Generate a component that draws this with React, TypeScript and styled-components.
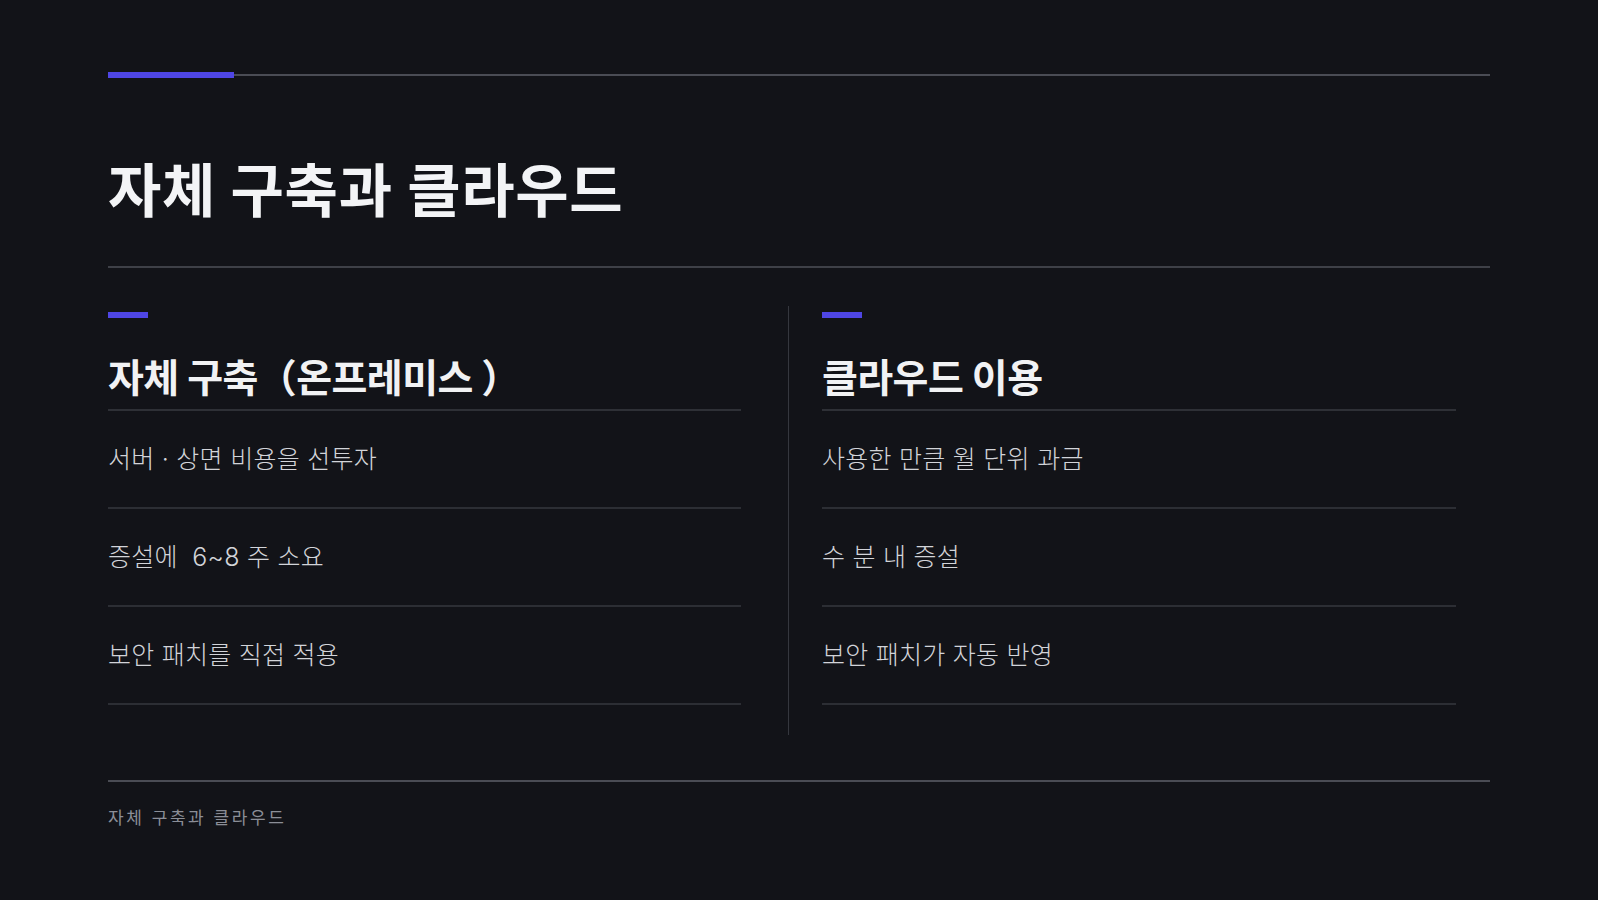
import React from 'react'
import styled, { createGlobalStyle } from 'styled-components'

const GlobalStyle = createGlobalStyle`
  html, body {
    margin: 0;
    padding: 0;
    background: #121318;
  }
  body {
    font-family: Inter, "Noto Sans CJK KR", "Noto Sans", sans-serif;
  }
`

const Slide = styled.div`
  width: 1598px;
  height: 900px;
  box-sizing: border-box;
  padding: 72px 108px 0;
  background: #121318;
  color: #f2f3f5;
  display: flex;
  flex-direction: column;
`

const TopRule = styled.div`
  display: flex;
  align-items: center;
  height: 6px;
`

const Accent = styled.div<{ $width: number }>`
  width: ${({ $width }) => $width}px;
  height: 6px;
  background: #4f46e5;
  flex-shrink: 0;
`

const RuleLine = styled.div`
  flex: 1;
  height: 2px;
  background: #4a4c54;
`

const Title = styled.h1`
  margin: 84px 0 0;
  padding-bottom: 46px;
  border-bottom: 2px solid #3e4047;
  font-size: 58px;
  line-height: 58px;
  font-weight: 700;
  letter-spacing: 0.012em;
  color: #f3f4f6;
`

const Columns = styled.div`
  display: grid;
  grid-template-columns: 680px 1px 1fr;
  margin-top: 38px;
`

const Column = styled.section<{ $left: number; $right: number }>`
  padding: 6px ${({ $right }) => $right}px 30px ${({ $left }) => $left}px;
`

const Divider = styled.div`
  background: #35373e;
`

const Heading = styled.h2`
  margin: 40px 0 0;
  padding-bottom: 12px;
  border-bottom: 2px solid #2e3036;
  font-size: 39px;
  line-height: 39px;
  font-weight: 700;
  letter-spacing: -0.015em;
  color: #f1f2f4;
`

const ItemList = styled.ul`
  list-style: none;
  margin: 0;
  padding: 0;
`

const Item = styled.li`
  height: 96px;
  display: flex;
  align-items: center;
  border-bottom: 2px solid #2c2e34;
  font-size: 25px;
  line-height: 25px;
  font-weight: 300;
  letter-spacing: 0.01em;
  color: #d2d4d9;
  white-space: pre;
`

const Footer = styled.footer`
  margin-top: 45px;
  border-top: 2px solid #4a4c54;
  padding-top: 28px;
`

const FooterText = styled.div`
  font-size: 17px;
  line-height: 17px;
  letter-spacing: 0.15em;
  color: #8b8e97;
`

const columns = [
  {
    title: '자체 구축（온프레미스 ）',
    items: ['서버 · 상면 비용을 선투자', '증설에  6~8 주 소요', '보안 패치를 직접 적용'],
  },
  {
    title: '클라우드 이용',
    items: ['사용한 만큼 월 단위 과금', '수 분 내 증설', '보안 패치가 자동 반영'],
  },
]

export default function App() {
  return (
    <>
      <GlobalStyle />
      <Slide>
        <TopRule>
          <Accent $width={126} />
          <RuleLine />
        </TopRule>
        <Title>자체 구축과 클라우드</Title>
        <Columns>
          <Column $left={0} $right={47}>
            <Accent $width={40} />
            <Heading>{columns[0].title}</Heading>
            <ItemList>
              {columns[0].items.map(item => (
                <Item key={item}>{item}</Item>
              ))}
            </ItemList>
          </Column>
          <Divider />
          <Column $left={33} $right={34}>
            <Accent $width={40} />
            <Heading>{columns[1].title}</Heading>
            <ItemList>
              {columns[1].items.map(item => (
                <Item key={item}>{item}</Item>
              ))}
            </ItemList>
          </Column>
        </Columns>
        <Footer>
          <FooterText>자체 구축과 클라우드</FooterText>
        </Footer>
      </Slide>
    </>
  )
}
